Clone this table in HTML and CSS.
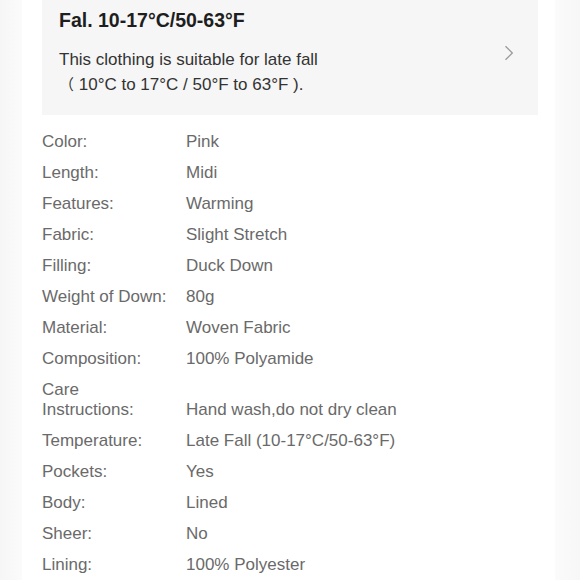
FILE: index.html
```html
<!DOCTYPE html>
<html lang="en">
<head>
<meta charset="utf-8">
<link rel="stylesheet" href="styles.css">
</head>
<body>
<div class="page">
  <div class="season">
    <div class="season-text">
      <div class="season-title">Fal. 10-17°C/50-63°F</div>
      <div class="season-desc">This clothing is suitable for late fall<br><span class="cjk">（</span> 10°C to 17°C / 50°F to 63°F ).</div>
    </div>
    <svg class="chevron" width="10" height="16" viewBox="0 0 10 16"><path d="M1.5 1.2 L8.3 8 L1.5 14.8" fill="none" stroke="#9a9a9a" stroke-width="1.3"/></svg>
  </div>
  <div class="specs">
    <div class="row"><div class="label">Color:</div><div class="value">Pink</div></div>
    <div class="row"><div class="label">Length:</div><div class="value">Midi</div></div>
    <div class="row"><div class="label">Features:</div><div class="value">Warming</div></div>
    <div class="row"><div class="label">Fabric:</div><div class="value">Slight Stretch</div></div>
    <div class="row"><div class="label">Filling:</div><div class="value">Duck Down</div></div>
    <div class="row"><div class="label">Weight of Down:</div><div class="value">80g</div></div>
    <div class="row"><div class="label">Material:</div><div class="value">Woven Fabric</div></div>
    <div class="row"><div class="label">Composition:</div><div class="value">100% Polyamide</div></div>
    <div class="row"><div class="label">Care Instructions:</div><div class="value">Hand wash,do not dry clean</div></div>
    <div class="row"><div class="label">Temperature:</div><div class="value">Late Fall (10-17°C/50-63°F)</div></div>
    <div class="row"><div class="label">Pockets:</div><div class="value">Yes</div></div>
    <div class="row"><div class="label">Body:</div><div class="value">Lined</div></div>
    <div class="row"><div class="label">Sheer:</div><div class="value">No</div></div>
    <div class="row"><div class="label">Lining:</div><div class="value">100% Polyester</div></div>
  </div>
</div>
</body>
</html>
```
FILE: styles.css
```css
html, body {
  margin: 0;
  padding: 0;
}
body {
  background: linear-gradient(to right, #f6f6f6 0, #fbfbfb 22px, #fff 22px, #fff 555px, #fbfbfb 555px, #f7f7f7 580px);
  font-family: "Liberation Sans", Arial, "Noto Sans CJK SC", sans-serif;
  height: 580px;
  overflow: hidden;
}
.page {
  width: 533px;
  margin-left: 22px;
  padding-left: 20px;
  box-sizing: border-box;
  height: 580px;
}
.season {
  width: 496px;
  box-sizing: border-box;
  background: #f6f6f6;
  padding: 8px 24px 18px 17px;
  display: flex;
  align-items: center;
  justify-content: space-between;
}
.season-title {
  font-size: 19.5px;
  line-height: 24px;
  font-weight: bold;
  color: #1e1e1e;
}
.season-desc {
  margin-top: 16px;
  font-size: 17px;
  line-height: 24px;
  color: #333;
}
.cjk {
  font-family: "Noto Sans CJK SC", sans-serif;
  font-size: 15px;
}
.chevron {
  display: block;
}
.specs {
  margin-top: 17px;
  display: flex;
  flex-direction: column;
  gap: 11px;
}
.row {
  display: flex;
  align-items: flex-end;
  gap: 16px;
  font-size: 17px;
  line-height: 20px;
  color: #6a6a6a;
}
.label {
  width: 128px;
  flex: none;
}
```
